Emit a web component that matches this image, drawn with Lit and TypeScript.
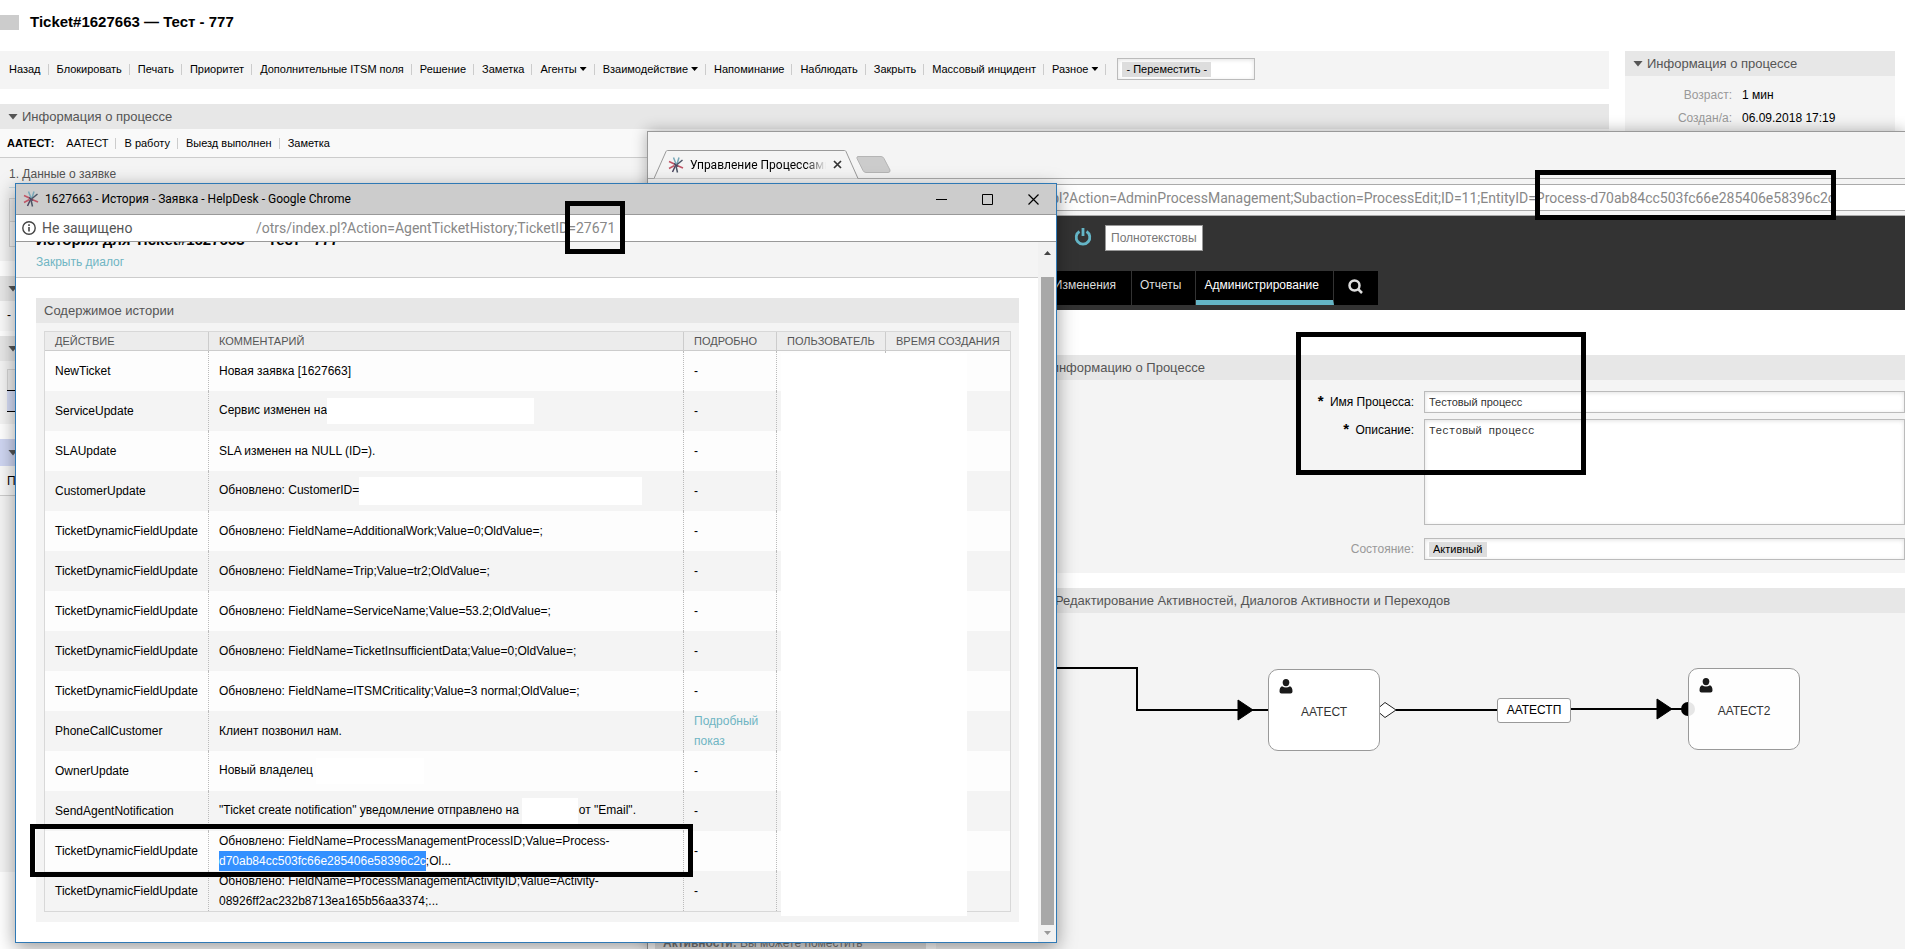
import { LitElement, html, css } from "lit";
import { customElement } from "lit/decorators.js";

const base = css`
  * { box-sizing: border-box; }
  a { color: inherit; text-decoration: none; }
  button { font: inherit; color: inherit; border: 0; background: none; padding: 0; }
  h1, h2, p, ul { margin: 0; padding: 0; font-weight: normal; }
  ul { list-style: none; }
  .ui { font-family: Roboto, "Open Sans", sans-serif; }
  .bar { display: flex; align-items: center; gap: 4px; height: 25px; padding: 0 8px; background: #e7e7e7; color: #555; font-size: 13px; white-space: nowrap; }
  .caret { flex: none; width: 10px; height: 6px; background: #555; clip-path: polygon(0 0, 100% 0, 50% 100%); }
  .control { width: 100%; border: 1px solid #bbb; background: #fff; box-shadow: inset 0 1px 4px rgba(0, 0, 0, 0.12); color: #333; border-radius: 0; outline: 0; resize: none; margin: 0; }
  .pick { display: flex; align-items: center; height: 22px; padding: 0 4px; }
  .pick select { appearance: none; border: 0; border-radius: 0; margin: 0; height: 15px; padding: 0 4px; background: #ddd; color: #000; font: 11px/15px "Liberation Sans", Arial, sans-serif; }
`;

const logo = html`<svg class="logo" width="16" height="18" viewBox="0 0 16 18" fill="none" stroke-width="1.5">
  <path d="M7.500 8.500 1 5.500M6.500 9.500 1 12.500" stroke="#c05566" />
  <path d="M8 8 5.500 1.500M9 8 11 1.500" stroke="#77a8b8" />
  <path d="M8.500 9 14.500 4M8 10 9.500 16.500" stroke="#4c5566" />
  <path d="M9 9.500 15 12" stroke="#c05566" />
  <path d="M7.500 9.500 4.500 16M6 7.500 10 10.500" stroke="#4c4660" />
</svg>`;

@customElement("ticket-page")
class TicketPage extends LitElement {
  static styles = [base, css`
    :host { display: block; }
    .title { display: flex; align-items: center; gap: 11px; height: 51px; padding-bottom: 7px; }
    .title i { width: 19px; height: 15px; background: #ccc; }
    .title h1 { font-size: 15px; line-height: 20px; font-weight: bold; }
    .columns { display: grid; grid-template-columns: 1fr 270px; gap: 16px; padding-right: 10px; align-items: start; }
    .actions { display: flex; align-items: center; height: 38px; padding: 0 0 2px 9px; background: #f4f4f4; font-size: 11px; margin-bottom: 15px; white-space: nowrap; }
    .actions ul, .process ul { display: flex; }
    .actions li, .process li { display: flex; align-items: center; }
    .actions li::after { content: ""; width: 1px; height: 11px; background: #ccc; margin: 0 8px 0 7px; }
    .menu::after { content: ""; width: 7px; height: 4px; background: #000; clip-path: polygon(0 0, 100% 0, 50% 100%); display: inline-block; margin: 0 0 2px 3px; }
    .actions .pick { width: 138px; margin-left: 3px; }
    .process { display: flex; align-items: center; gap: 12px; height: 29px; padding-left: 7px; background: #f9f9f9; border-bottom: 1px solid #ccc; font-size: 11px; }
    .process li + li::before { content: ""; width: 1px; height: 11px; background: #ccc; margin: 0 8px 0 7px; }
    .data { height: 103px; background: #f4f4f4; padding: 8px 9px 0; color: #555; font-size: 12px; line-height: 16px; }
    .data hr { border: 0; border-top: 1px solid #c9d9e0; margin: 5px 0 10px; }
    .grid { border: 1px solid #d4d4d4; height: 49px; }
    .grid i { display: block; height: 23px; border-bottom: 1px solid #d4d4d4; background: #eee; }
    .gap { height: 15px; }
    .dash { height: 30px; line-height: 28px; padding-left: 7px; font-size: 12px; background: #f9f9f9; margin-bottom: 5px; }
    .list { height: 63px; padding: 8px 7px; background: #f4f4f4; margin-bottom: 15px; }
    .list i { display: block; height: 21px; border: 1px solid #d4d4d4; border-bottom: 0; background: #eee; }
    .list b { display: block; height: 22px; border: 1px solid #000; border-width: 1px 0; background: #d5dcf5; }
    .bar.blue { height: 27px; background: #cfd6f2; }
    .from { height: 30px; line-height: 30px; padding-left: 7px; font-size: 12px; background: #f9f9f9; border-bottom: 1px solid #ccc; }
    .body { height: 376px; background: #f4f4f4; }
    dl { display: grid; grid-template-columns: 107px 1fr; column-gap: 10px; margin: 0; padding: 8px 0 20px; background: #f4f4f4; font-size: 12px; line-height: 23px; }
    dt { text-align: right; color: #999; }
    dd { margin: 0; }
  `];
  render() {
    const actions = ["Назад", "Блокировать", "Печать", "Приоритет", "Дополнительные ITSM поля", "Решение", "Заметка", "Агенты*", "Взаимодействие*", "Напоминание", "Наблюдать", "Закрыть", "Массовый инцидент", "Разное*"];
    return html`
      <header class="title"><i></i><h1>Ticket#1627663 — Тест - 777</h1></header>
      <div class="columns">
        <main>
          <nav class="actions">
            <ul>${actions.map((a) => html`<li><a href="#" class=${a.endsWith("*") ? "menu" : ""}>${a.replace("*", "")}</a></li>`)}</ul>
            <div class="control pick"><select aria-label="Переместить"><option>- Переместить -</option></select></div>
          </nav>
          <h2 class="bar"><i class="caret"></i>Информация о процессе</h2>
          <div class="process"><b>ААТЕСТ:</b><ul>${["ААТЕСТ", "В работу", "Выезд выполнен", "Заметка"].map((a) => html`<li><a href="#">${a}</a></li>`)}</ul></div>
          <section class="data"><p>1. Данные о заявке</p><hr /><div class="grid"><i></i></div></section>
          <div class="gap"></div>
          <h2 class="bar"><i class="caret"></i></h2>
          <p class="dash">-</p>
          <h2 class="bar"><i class="caret"></i></h2>
          <div class="list"><i></i><b></b></div>
          <h2 class="bar blue"><i class="caret"></i></h2>
          <p class="from">По</p>
          <div class="body"></div>
        </main>
        <aside>
          <h2 class="bar"><i class="caret"></i>Информация о процессе</h2>
          <dl><dt>Возраст:</dt><dd>1 мин</dd><dt>Создан/а:</dt><dd>06.09.2018 17:19</dd></dl>
        </aside>
      </div>`;
  }
}

@customElement("process-window")
class ProcessWindow extends LitElement {
  static styles = [base, css`
    :host { box-sizing: border-box; display: flex; flex-direction: column; background: #f4f4f4; border: 1px solid #999; border-width: 1px 0 0 1px; box-shadow: 0 0 14px rgba(0, 0, 0, 0.3); overflow: hidden; }
    .tabs { display: flex; align-items: flex-end; height: 47px; padding-left: 6px; border-bottom: 1px solid #aaa; flex: none; }
    .tab { position: relative; display: flex; align-items: center; gap: 6px; width: 206px; height: 29px; margin-bottom: -1px; padding-left: 14px; font-size: 12px; }
    .shape { position: absolute; inset: 0; }
    .tab span { position: relative; width: 136px; overflow: hidden; white-space: nowrap; mask-image: linear-gradient(90deg, #000 85%, transparent); }
    .logo { position: relative; flex: none; }
    .tab button { position: relative; display: flex; margin-left: 1px; }
    .plus { width: 35px; height: 17px; margin: 0 0 2px -4px; }
    .address { flex: none; height: 37px; padding: 5px 0; border-bottom: 1px solid #aaa; }
    .address input { display: block; width: 100%; height: 27px; border: 1px solid #aaa; border-right: 0; background: #fff; color: #888; font-size: 14px; padding: 0 0 0 329px; margin: 0; outline: 0; }
    .top { flex: none; display: flex; flex-direction: column; justify-content: space-between; height: 94px; background: #333; padding: 9px 0 5px 426px; color: #ddd; }
    .tools { display: flex; align-items: center; gap: 13px; }
    .tools input { width: 98px; height: 26px; border: 1px solid #999; padding: 0 5px; font: 12px "Liberation Sans", Arial, sans-serif; color: #777; margin: 0; }
    .tools input::placeholder { color: #777; }
    .nav { display: flex; height: 34px; margin-left: -42px; font-size: 12px; }
    .nav a { display: flex; align-items: flex-start; padding: 7px 14px 0 8px; line-height: 14px; background: #000; border-right: 1px solid #333; }
    .nav a:first-child { width: 100px; justify-content: flex-end; padding-right: 15px; }
    .nav .current { color: #fff; border-bottom: 5px solid #64b5c6; }
    .nav .find { padding: 8px 15px 0 14px; border: 0; }
    .page { flex: 1; display: grid; grid-template-columns: 271px 1fr; column-gap: 10px; padding: 45px 0 0 7px; background: #fff; }
    .side { background: #e4e4e4; color: #777; font-size: 12px; padding: 581px 8px 0; }
    .main { display: flex; flex-direction: column; }
    .form { display: grid; grid-template-columns: 478px 1fr; column-gap: 10px; padding: 11px 0 13px; margin-bottom: 15px; background: #f4f4f4; font-size: 12px; }
    .form label { text-align: right; line-height: 23px; height: 22px; }
    .form .state { color: #999; margin-top: 13px; }
    .form label b { font-size: 15px; margin-right: 3px; line-height: 12px; }
    .form input { height: 22px; padding: 0 4px; font: 11px "Liberation Sans", Arial, sans-serif; margin-bottom: 6px; }
    .form textarea { height: 106px; padding: 5px 4px; font: 11px/13px "Liberation Mono", "Courier New", monospace; }
    .form .pick { margin-top: 13px; }
    .canvas { position: relative; flex: 1; background: #f4f4f4; font-size: 12px; }
    .lines { position: absolute; left: 0; top: 0; }
    .node { position: absolute; display: grid; place-items: center; width: 112px; height: 82px; border: 1px solid #999; border-radius: 10px; background: #fff; color: #333; padding-top: 4px; }
    .node svg { position: absolute; left: 10px; top: 9px; }
    .a { left: 332px; top: 56px; }
    .b { left: 752px; top: 55px; background: rgba(255, 255, 255, 0.9); }
    .link { position: absolute; left: 561px; top: 85px; width: 74px; height: 25px; border: 1px solid #999; border-radius: 3px; background: #fff; text-align: center; line-height: 23px; }
  `];
  render() {
    const user = html`<svg width="14" height="15" viewBox="0 0 14 15" fill="#1a1a1a"><ellipse cx="7" cy="3.600" rx="3.300" ry="3.600" /><path d="M3 7.200Q7 10 11 7.200Q13.500 8 13.500 12.500Q13.500 14.500 11.500 14.500H2.500Q.5 14.500.5 12.500Q.5 8 3 7.200Z" /></svg>`;
    return html`
      <div class="tabs ui">
        <div class="tab">
          <svg class="shape" width="206" height="29" viewBox="0 0 206 29"><path d="M0 28.500 12 1.500Q12.500.5 13.500.5H190.500Q191.500.5 192 1.500L204 28.500" fill="#f4f4f4" stroke="#999" /></svg>
          ${logo}<span>Управление Процессами</span>
          <button aria-label="Закрыть вкладку"><svg width="9" height="9" viewBox="0 0 9 9"><path d="M1 1 8 8M8 1 1 8" stroke="#333" stroke-width="1.700" /></svg></button>
        </div>
        <button aria-label="Новая вкладка"><svg class="plus" viewBox="0 0 35 17"><path d="M2 .5H25Q27 .5 28 2.500L34 14Q34.500 16.500 32 16.500H10Q8 16.500 7 14.500L1 2.500Q.5.500 2 .5Z" fill="#ccc" stroke="#b5b5b5" /></svg></button>
      </div>
      <div class="address"><input class="ui" aria-label="Адрес" readonly value="/otrs/index.pl?Action=AdminProcessManagement;Subaction=ProcessEdit;ID=11;EntityID=Process-d70ab84cc503fc66e285406e58396c2c" /></div>
      <div class="top">
        <div class="tools">
          <button aria-label="Выход"><svg width="18" height="19" viewBox="0 0 18 19" fill="none" stroke="#64b5c6" stroke-width="2.800"><path d="M5.500 4.500A6.800 6.800 0 1 0 12.500 4.500" /><path d="M9 1V9" /></svg></button>
          <input aria-label="Поиск" placeholder="Полнотекстовый" />
        </div>
        <nav class="nav">
          <a href="#">Изменения</a><a href="#">Отчеты</a><a href="#" class="current">Администрирование</a>
          <a href="#" class="find" aria-label="Поиск"><svg width="15" height="15" viewBox="0 0 15 15" fill="none" stroke="#ddd" stroke-width="2.500"><circle cx="6.500" cy="6.500" r="5" /><path d="M10 10 14 14" /></svg></a>
        </nav>
      </div>
      <div class="page">
        <aside class="side"><b>Активности:</b> Вы можете поместить</aside>
        <div class="main">
          <h2 class="bar">Изменить общую информацию о Процессе</h2>
          <form class="form">
            <label for="name"><b>*</b> Имя Процесса:</label><input id="name" class="control" value="Тестовый процесс" />
            <label for="about"><b>*</b> Описание:</label><textarea id="about" class="control">Тестовый процесс</textarea>
            <label for="state" class="state">Состояние:</label><div class="control pick"><select id="state"><option>Активный</option></select></div>
          </form>
          <h2 class="bar">Рабочее полотно: Редактирование Активностей, Диалогов Активности и Переходов</h2>
          <div class="canvas">
            <svg class="lines" width="960" height="160" viewBox="0 0 960 160" fill="none" stroke="#000" stroke-width="2">
              <path d="M60 55H201V97H332M460 97H561M635 96H752" />
              <path d="M302 87 317 97 302 107ZM721 86 736 96 721 106Z" fill="#000" stroke-width="1" />
              <circle cx="752" cy="96" r="7" fill="#000" stroke="none" />
              <path d="M440 97 449 89.500 460 97 449 104.500Z" fill="#fff" stroke="#222" stroke-width="1" />
            </svg>
            <div class="node a">${user}ААТЕСТ</div>
            <div class="link">ААТЕСТП</div>
            <div class="node b">${user}ААТЕСТ2</div>
          </div>
        </div>
      </div>`;
  }
}

@customElement("history-window")
class HistoryWindow extends LitElement {
  static styles = [base, css`
    :host { box-sizing: border-box; display: flex; flex-direction: column; background: #fff; border: 1px solid #2f79b5; box-shadow: 0 5px 18px rgba(0, 0, 0, 0.4); }
    .caption { flex: none; display: flex; align-items: center; gap: 6px; height: 31px; padding: 0 17px 0 7px; background: #ccc; border-bottom: 1px solid #999; font-size: 12px; white-space: nowrap; }
    .caption span { flex: 1; }
    .buttons { display: flex; gap: 35px; }
    .buttons button { display: flex; }
    .address { flex: none; display: flex; align-items: center; height: 27px; padding-left: 6px; border-bottom: 1px solid #999; font-size: 14px; color: #555; white-space: nowrap; }
    .address span { width: 214px; margin-left: 6px; }
    .address input { flex: 1; border: 0; padding: 0; margin: 0; font: inherit; color: #888; background: none; outline: 0; }
    .view { flex: 1; display: flex; min-height: 0; }
    .doc { flex: 1; min-width: 0; overflow: hidden; }
    .head { height: 36px; padding: 0 20px; background: #f4f4f4; border-bottom: 1px solid #ccc; }
    .clip { display: flex; align-items: flex-end; height: 7px; overflow: hidden; font-size: 15px; line-height: 18px; font-weight: bold; white-space: pre; }
    .close { display: block; font-size: 12px; line-height: 14px; padding-top: 6px; color: #6fb5c3; }
    .panel { margin: 20px 19px 0 20px; background: #f4f4f4; padding-bottom: 10px; }
    .table { position: relative; margin: 8px 8px 0; }
    table { width: 100%; table-layout: fixed; border-collapse: separate; border-spacing: 0; border: 1px solid #d8d8d8; font-size: 12px; line-height: 20px; background: #fdfdfd; }
    .c1 { width: 163px; } .c3 { width: 93px; } .c4 { width: 109px; } .c5 { width: 125px; }
    th { height: 19px; padding: 0 10px; text-align: left; font-weight: normal; font-size: 11px; line-height: 18px; color: #555; background: #ececec; border-bottom: 1px solid #ccc; text-transform: uppercase; white-space: nowrap; }
    th + th { border-left: 1px solid #ccc; }
    td { height: 40px; padding: 0 10px; white-space: nowrap; }
    td + td { border-left: 1px dotted #bbb; }
    td:nth-child(3) { white-space: normal; }
    tr:nth-child(even) td { background: #f4f4f4; }
    .mask { display: inline-block; vertical-align: middle; background: #fff; height: 26px; }
    .service { width: 207px; } .customer { width: 283px; height: 28px; } .owner { width: 108px; } .agent { width: 56px; margin: 0 1px 0 3px; }
    .cover { position: absolute; top: 22px; bottom: -4px; right: 44px; width: 186px; background: #fff; }
    .sel { background: #3390ff; color: #fff; display: inline-block; height: 20px; }
    .more { color: #6fb5c3; }
    .scroll { flex: none; display: flex; flex-direction: column; align-items: center; width: 18px; background: #f1f1f1; }
    .scroll i { width: 13px; flex: 1; background: #a8a8a8; }
    .scroll svg { margin: 9px 0 22px; }
    .scroll svg:last-child { margin: 6px 0 7px; }
  `];
  render() {
    const f = (s: string) => `Обновлено: FieldName=${s};OldValue=;`;
    const t = "TicketDynamicFieldUpdate";
    const rows: [string, unknown][] = [
      ["NewTicket", "Новая заявка [1627663]"],
      ["ServiceUpdate", html`Сервис изменен на<span class="mask service"></span>`],
      ["SLAUpdate", "SLA изменен на NULL (ID=)."],
      ["CustomerUpdate", html`Обновлено: CustomerID=<span class="mask customer"></span>`],
      [t, f("AdditionalWork;Value=0")],
      [t, f("Trip;Value=tr2")],
      [t, f("ServiceName;Value=53.2")],
      [t, f("TicketInsufficientData;Value=0")],
      [t, f("ITSMCriticality;Value=3 normal")],
      ["PhoneCallCustomer", "Клиент позвонил нам."],
      ["OwnerUpdate", html`Новый владелец <span class="mask owner"></span>`],
      ["SendAgentNotification", html`"Ticket create notification" уведомление отправлено на<span class="mask agent"></span>от "Email".`],
      [t, html`Обновлено: FieldName=ProcessManagementProcessID;Value=Process-<br /><span class="sel">d70ab84cc503fc66e285406e58396c2c</span>;Ol...`],
      [t, html`Обновлено: FieldName=ProcessManagementActivityID;Value=Activity-<br />08926ff2ac232b8713ea165b56aa3374;...`],
    ];
    return html`
      <header class="caption ui">
        ${logo}<span>1627663 - История - Заявка - HelpDesk - Google Chrome</span>
        <div class="buttons">
          <button aria-label="Свернуть"><svg width="11" height="11"><path d="M0 5.500H11" stroke="#000" /></svg></button>
          <button aria-label="Развернуть"><svg width="11" height="11"><path d="M.5.500H10.500V10.500H.5Z" fill="none" stroke="#000" /></svg></button>
          <button aria-label="Закрыть"><svg width="11" height="11"><path d="M.5.500 10.500 10.500M10.500.500.500 10.500" stroke="#000" stroke-width="1.200" /></svg></button>
        </div>
      </header>
      <div class="address ui">
        <svg width="14" height="14" viewBox="0 0 14 14"><circle cx="7" cy="7" r="6.200" fill="none" stroke="#444" stroke-width="1.400" /><path d="M7 6V10.500M7 3.300V4.900" stroke="#444" stroke-width="1.600" /></svg>
        <span>Не защищено</span><input aria-label="Адрес" readonly value="/otrs/index.pl?Action=AgentTicketHistory;TicketID=27671" />
      </div>
      <div class="view">
        <div class="doc">
          <div class="head">
            <h1 class="clip">История для Ticket#1627663 — Тест - 777</h1>
            <a class="close" href="#">Закрыть диалог</a>
          </div>
          <section class="panel">
            <h2 class="bar">Содержимое истории</h2>
            <div class="table">
              <table>
                <colgroup><col class="c1" /><col /><col class="c3" /><col class="c4" /><col class="c5" /></colgroup>
                <thead><tr><th>Действие</th><th>Комментарий</th><th>Подробно</th><th>Пользователь</th><th>Время создания</th></tr></thead>
                <tbody>${rows.map(([a, c]) => html`<tr><td>${a}</td><td>${c}</td><td>${a === "PhoneCallCustomer" ? html`<a class="more" href="#">Подробный показ</a>` : "-"}</td><td></td><td></td></tr>`)}</tbody>
              </table>
              <div class="cover"></div>
            </div>
          </section>
        </div>
        <div class="scroll">
          <svg width="7" height="4"><path d="M0 4H7L3.500 0Z" fill="#444" /></svg><i></i><svg width="7" height="4"><path d="M0 0H7L3.500 4Z" fill="#999" /></svg>
        </div>
      </div>`;
  }
}

@customElement("app-root")
class AppRoot extends LitElement {
  static styles = css`
    :host { display: block; position: relative; height: 100vh; overflow: hidden; background: #fff; color: #000; font: 12px "Liberation Sans", Arial, sans-serif; }
    process-window { position: absolute; left: 647px; right: 0; top: 131px; bottom: 0; }
    history-window { position: absolute; left: 15px; top: 183px; width: 1042px; height: 760px; }
    .mark { box-sizing: border-box; position: absolute; border: 5px solid #000; pointer-events: none; }
    .ticket-id { left: 565px; top: 201px; width: 60px; height: 53px; }
    .entity-id { left: 1535px; top: 170px; width: 301px; height: 50px; }
    .name { left: 1296px; top: 332px; width: 290px; height: 143px; }
    .entry { left: 30px; top: 824px; width: 663px; height: 53px; }
  `;
  render() {
    return html`
      <ticket-page></ticket-page>
      <process-window></process-window>
      <history-window></history-window>
      <div class="mark ticket-id"></div>
      <div class="mark entity-id"></div>
      <div class="mark name"></div>
      <div class="mark entry"></div>`;
  }
}
